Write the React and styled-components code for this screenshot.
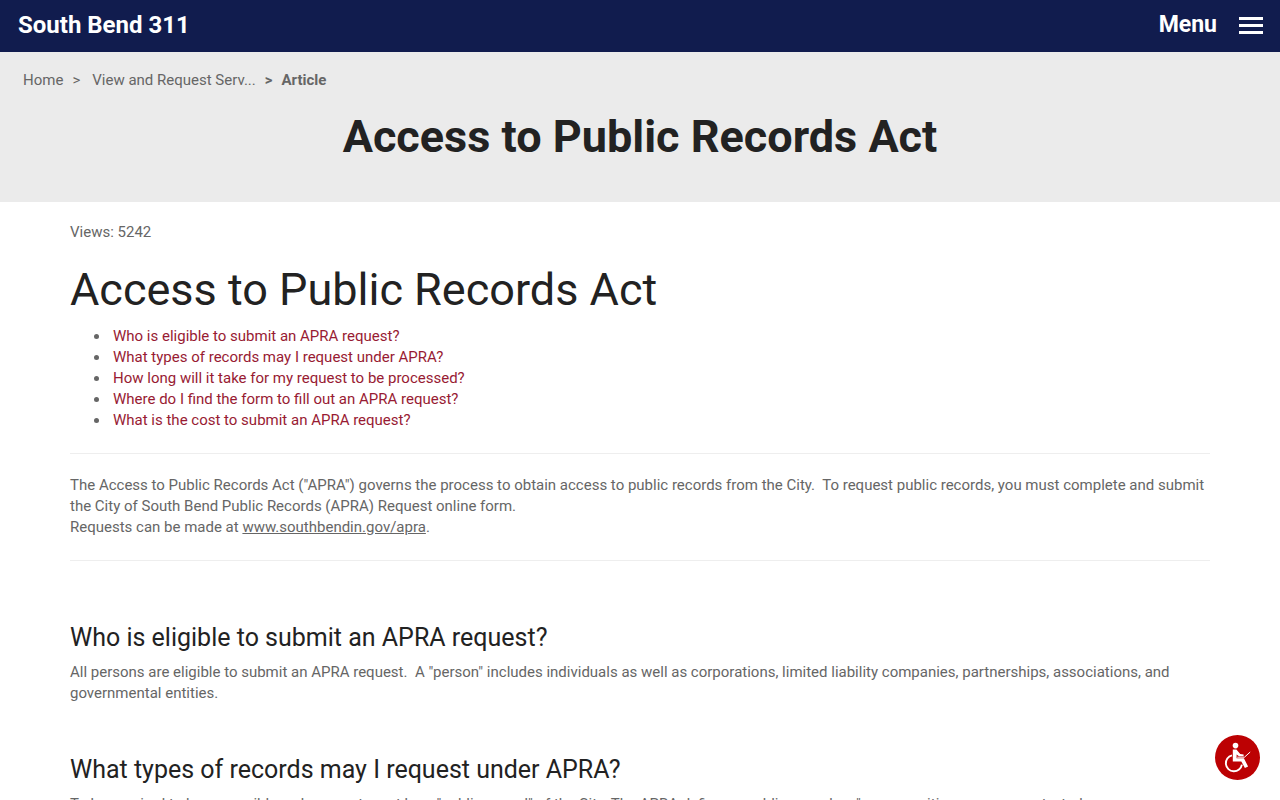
import React from 'react';
import styled, { createGlobalStyle } from 'styled-components';

const GlobalStyle = createGlobalStyle`
    * {
        box-sizing: border-box;
    }

    body {
        margin: 0;
        background: #fff;
        color: #666;
        font-family: Roboto, "Liberation Sans", sans-serif;
        font-size: 15px;
        line-height: 21px;
    }
`;

const TopBar = styled.header`
    display: flex;
    justify-content: space-between;
    align-items: center;
    height: 52px;
    padding: 0 17px 2px 18px;
    background: #111c4e;
`;

const Brand = styled.a`
    color: #fff;
    font-size: 24px;
    font-weight: bold;
    line-height: 32px;
    text-decoration: none;
`;

const MenuButton = styled.button`
    display: flex;
    align-items: center;
    gap: 22px;
    padding: 0;
    border: 0;
    background: none;
    color: #fff;
    font: bold 23px/32px Roboto, "Liberation Sans", sans-serif;
    cursor: pointer;
`;

const Bars = styled.span`
    display: flex;
    flex-direction: column;
    gap: 4px;

    & span {
        width: 24px;
        height: 3px;
        background: #fff;
    }
`;

const Banner = styled.div`
    padding: 18px 23px 37px;
    background: #ebebeb;
`;

const Breadcrumb = styled.ol`
    display: flex;
    margin: 0;
    padding: 0;
    list-style: none;

    & li + li::before {
        content: ">";
        padding: 0 12px 0 9px;
    }

    & li:last-child {
        font-weight: bold;
    }

    & li:last-child::before {
        padding-right: 9px;
    }

    & a {
        color: inherit;
        text-decoration: none;
    }
`;

const BannerTitle = styled.h1`
    margin: 18px 0 0;
    color: #222;
    font-size: 45px;
    font-weight: bold;
    line-height: 56px;
    text-align: center;
`;

const Content = styled.main`
    max-width: 1170px;
    margin: 0 auto;
    padding: 20px 15px 40px;
`;

const Title = styled.h2`
    margin: 19px 0 8px;
    color: #222;
    font-size: 45px;
    font-weight: normal;
    line-height: 56px;
`;

const Heading = styled.h3`
    margin: ${props => props.$first ? "61px" : "50px"} 0 8px;
    color: #222;
    font-size: 25px;
    font-weight: normal;
    line-height: 32px;
`;

const Text = styled.p`
    margin: 0;
`;

const Questions = styled.ul`
    margin: 0;
    padding-left: 40px;

    & li {
        padding-left: 3px;
    }

    & a {
        color: #981b33;
        text-decoration: none;
    }
`;

const Divider = styled.hr`
    margin: 22px 0 21px;
    border: 0;
    border-top: 1px solid #eee;
`;

const FormLink = styled.a`
    color: inherit;
`;

const AccessibilityButton = styled.button`
    position: fixed;
    right: 20px;
    bottom: 20px;
    width: 45px;
    height: 45px;
    padding: 0;
    border: 0;
    border-radius: 50%;
    background: #bc0103;
    cursor: pointer;

    & svg {
        display: block;
    }
`;

const questions = [
    { id: "eligible", text: "Who is eligible to submit an APRA request?" },
    { id: "types", text: "What types of records may I request under APRA?" },
    { id: "time", text: "How long will it take for my request to be processed?" },
    { id: "form", text: "Where do I find the form to fill out an APRA request?" },
    { id: "cost", text: "What is the cost to submit an APRA request?" },
];

function WheelchairIcon() {
    return (
        <svg width="45" height="45" viewBox="0 0 45 45" fill="none" stroke="#fff" aria-hidden="true">
            <circle cx="20.5" cy="10.6" r="2.8" fill="#fff" stroke="none" />
            <path d="M17 20.3a8.1 8.1 0 1 0 9.9 9.3" strokeWidth="1.9" />
            <path d="M17.8 14.4h3.6l3.8 4.6 3.4.6v1.6h-4.6l-2.4-1.8v3.8h7.3l4.2 8.4-3.2 1.5-3.6-6.5h-8.5z" fill="#fff" stroke="none" />
            <path d="M22.2 22.2h7.3l5.7-5.2" strokeWidth="1" />
        </svg>
    )
}

export default function App() {
    return (
        <>
            <GlobalStyle />
            <TopBar>
                <Brand href="#">South Bend 311</Brand>
                <MenuButton type="button">
                    Menu
                    <Bars><span /><span /><span /></Bars>
                </MenuButton>
            </TopBar>
            <Banner>
                <nav aria-label="Breadcrumb">
                    <Breadcrumb>
                        <li><a href="#">Home</a></li>
                        <li><a href="#">View and Request Serv...</a></li>
                        <li>Article</li>
                    </Breadcrumb>
                </nav>
                <BannerTitle>Access to Public Records Act</BannerTitle>
            </Banner>
            <Content>
                <Text>Views: 5242</Text>
                <Title>Access to Public Records Act</Title>
                <Questions>
                    {questions.map(question => (
                        <li key={question.id}><a href={`#${question.id}`}>{question.text}</a></li>
                    ))}
                </Questions>
                <Divider />
                <Text>
                    The Access to Public Records Act ("APRA") governs the process to obtain access to public records from the City.&nbsp; To request public records, you must complete and submit the City of South Bend Public Records (APRA) Request online form.
                    <br />
                    Requests can be made at <FormLink href="#apra">www.southbendin.gov/apra</FormLink>.
                </Text>
                <Divider />
                <Heading id="eligible" $first>Who is eligible to submit an APRA request?</Heading>
                <Text>
                    All persons are eligible to submit an APRA request.&nbsp; A "person" includes individuals as well as corporations, limited liability companies, partnerships, associations, and governmental entities.
                </Text>
                <Heading id="types">What types of records may I request under APRA?</Heading>
                <Text>
                    To be required to be accessible, a document must be a "public record" of the City. The APRA defines a public record as "any . . . writing, paper, report, study, map, photograph, book, card, tape recording, or other material.
                </Text>
            </Content>
            <AccessibilityButton type="button" aria-label="Accessibility options">
                <WheelchairIcon />
            </AccessibilityButton>
        </>
    )
}
